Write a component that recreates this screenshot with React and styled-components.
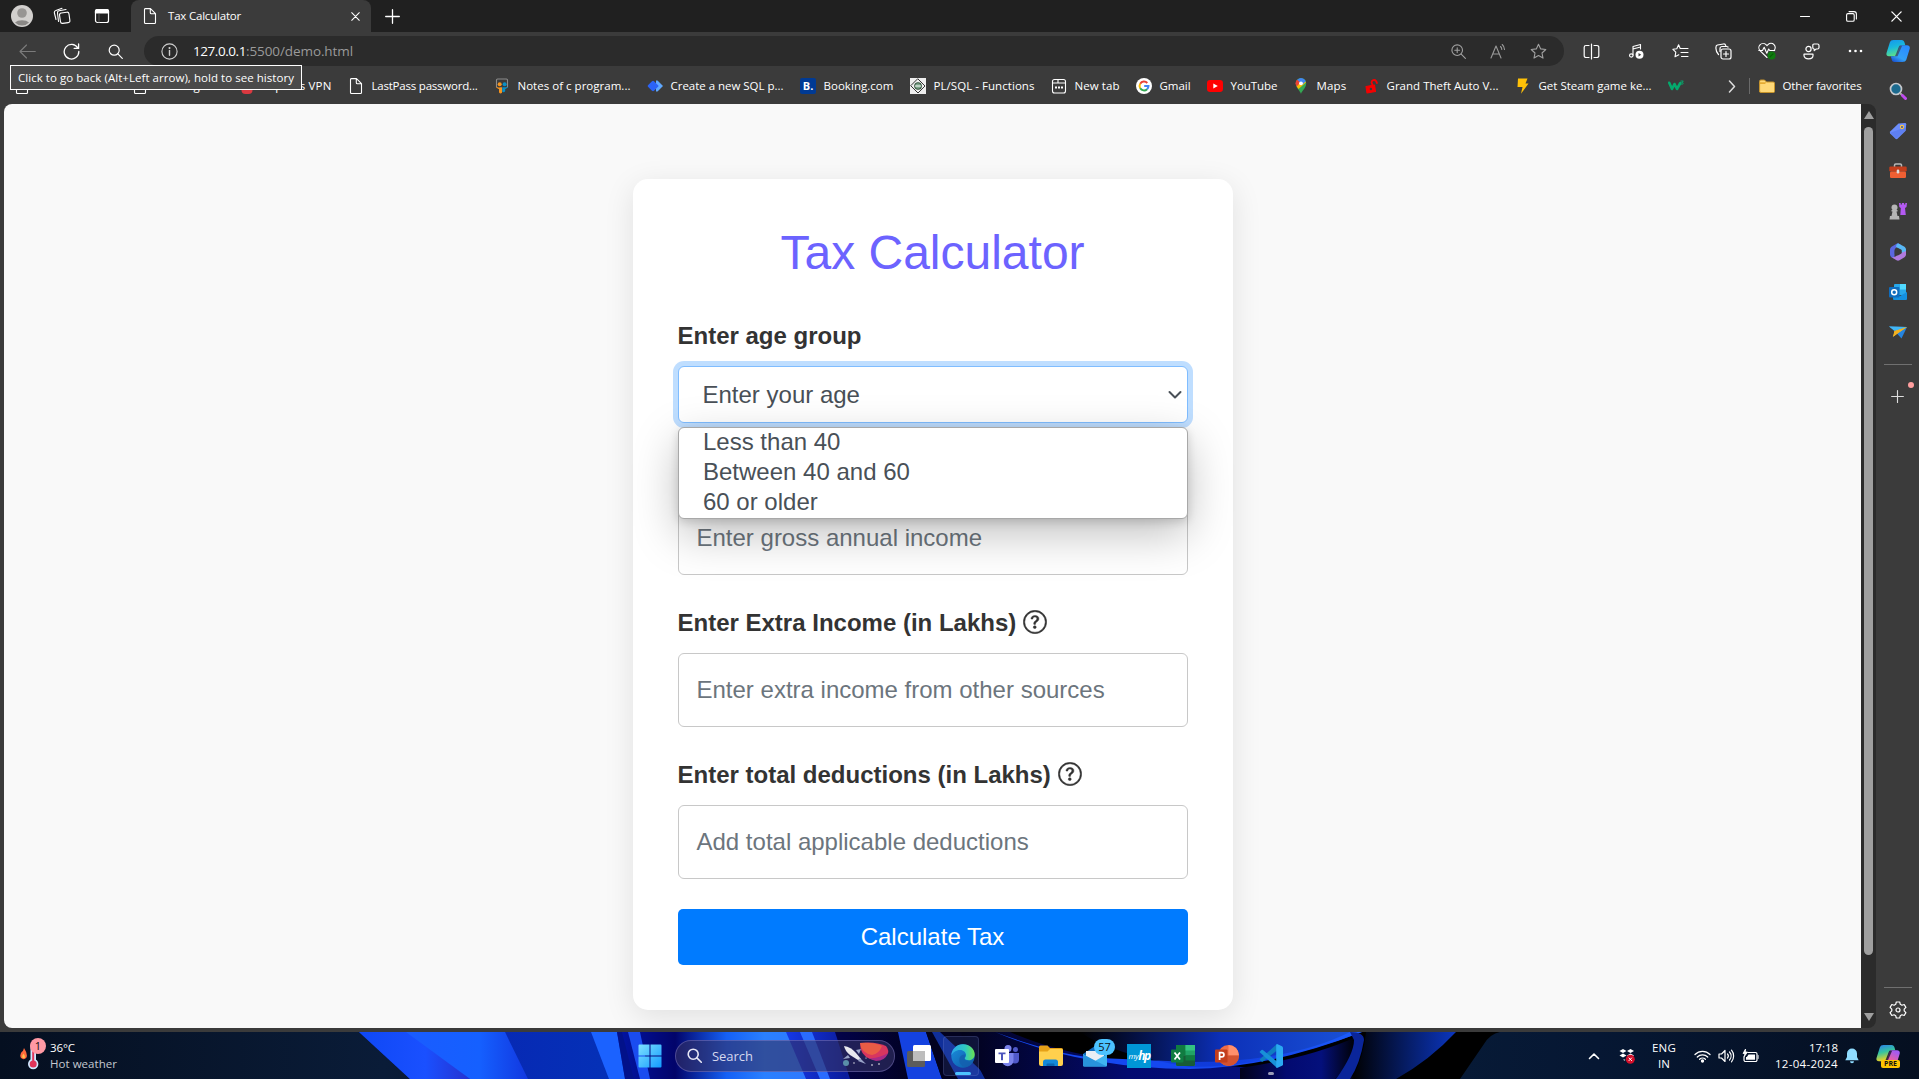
import React, { useLayoutEffect, useRef, useState } from "react";
import styled, { createGlobalStyle, css } from "styled-components";

const UI_FONT = '"Open Sans", "Noto Sans", sans-serif';
const PAGE_FONT = '"Liberation Sans", Arial, sans-serif';

const GlobalStyle = createGlobalStyle`
  * { box-sizing: border-box; }
  html, body { margin: 0; height: 100%; overflow: hidden; background: #3b3b3b; }
  body { font-family: ${UI_FONT}; }
  svg { display: block; flex: none; }
`;

/* ---------- text that keeps a given width ---------- */

const TextSpan = styled.span`
  display: inline-block;
  flex: none;
  white-space: pre;
  font-size: ${(p) => p.$size}px;
  line-height: ${(p) => p.$line || 16}px;
  color: ${(p) => p.$color || "#fff"};
`;

function FitText({ width, size = 11.5, line, color, children }) {
  const ref = useRef(null);
  const [spacing, setSpacing] = useState(0);
  useLayoutEffect(() => {
    const natural = ref.current.getBoundingClientRect().width;
    setSpacing((width - natural) / String(children).length);
  }, [width, children]);
  return (
    <TextSpan ref={ref} $size={size} $line={line} $color={color} style={{ letterSpacing: spacing }}>
      {children}
    </TextSpan>
  );
}

/* ---------- icons ---------- */

function Icon({ w = 16, h, box, children, color = "#fff", sw = 1.1 }) {
  const hh = h || w;
  return (
    <svg width={w} height={hh} viewBox={box || `0 0 ${w} ${hh}`} fill="none" stroke={color} strokeWidth={sw} strokeLinecap="round" strokeLinejoin="round">
      {children}
    </svg>
  );
}

const PageIcon = () => (
  <Icon w={16}>
    <path d="M3.5 .6h5L13.5 5.6v8.9a1 1 0 0 1-1 1h-9a1 1 0 0 1-1-1v-13a1 1 0 0 1 1-.9zM8.3 .8v4a1 1 0 0 0 1 1h4" />
  </Icon>
);
const Avatar = () => (
  <svg width="22" height="22" viewBox="0 0 22 22">
    <circle cx="11" cy="11" r="11" fill="#d2d0ce" />
    <circle cx="11" cy="8" r="4.8" fill="#979593" />
    <path d="M4 17.5a8 4.5 0 0 1 14 0a9.5 9.5 0 0 1-14 0z" fill="#8a8886" />
  </svg>
);
const WorkspacesIcon = () => (
  <Icon w={18}>
    <rect x="7" y="5.5" width="9.5" height="10.5" rx="2" transform="rotate(-8 12 11)" />
    <path d="M5.5 14.5l-1-8.500a2 2 0 0 1 1.500-2.200l7-1.300M3 12.500l-1.600-6.500a2 2 0 0 1 1.500-2.500L9 1.200" />
  </Icon>
);
const TabActionsIcon = () => (
  <Icon w={16} sw={1.2}>
    <rect x="1.500" y="1.500" width="13" height="13" rx="2" />
    <path d="M1.500 5V3a1.500 1.500 0 0 1 1.500-1.500h10A1.500 1.500 0 0 1 14.500 3v2z" fill="#fff" />
    <path d="M5 5.500v9" stroke="#777" strokeWidth=".6" />
  </Icon>
);
const CloseIcon = ({ s = 9 }) => (
  <Icon w={s} box="0 0 10 10" sw={1.2}><path d="M.8.8l8.400 8.400M9.200.8L.8 9.200" /></Icon>
);
const PlusIcon = ({ s = 15, color }) => (
  <Icon w={s} box="0 0 15 15" sw={1.3} color={color}><path d="M7.500.7v13.600M.7 7.500h13.600" /></Icon>
);
const MinIcon = () => <Icon w={10}><path d="M.5 5.500h9" /></Icon>;
const RestoreIcon = () => (
  <Icon w={11} sw={1.1}><rect x=".6" y="2.600" width="7.600" height="7.600" rx="1.300" /><path d="M3 .6h5a2.400 2.400 0 0 1 2.400 2.400v5" /></Icon>
);
const BackIcon = () => <Icon w={17} color="#7b7b7b"><path d="M16.300 8.500H1M7.500 2L1 8.500 7.500 15" /></Icon>;
const RefreshIcon = () => (
  <Icon w={17} sw={1.300}><path d="M14.800 5A7.300 7.300 0 1 0 15.800 8.500M15.600 1v4.400h-4.400" /></Icon>
);
const SearchIcon = ({ s = 15, sw = 1.200, color }) => (
  <Icon w={s} box="0 0 15 15" sw={sw} color={color}><circle cx="6.200" cy="6.200" r="5" /><path d="M9.900 9.900l4.400 4.400" /></Icon>
);
const InfoIcon = () => (
  <Icon w={17} color="#d0d0d0"><circle cx="8.500" cy="8.500" r="7.600" /><path d="M8.500 7.500v4.700" strokeWidth="1.400" /><circle cx="8.500" cy="5" r=".5" fill="#d0d0d0" /></Icon>
);
const ZoomInIcon = () => (
  <Icon w={15} color="#a0a0a0"><circle cx="6.200" cy="6.200" r="5.300" /><path d="M10.200 10.200l4.200 4.200M6.200 3.800v4.800M3.800 6.200h4.800" /></Icon>
);
const ReadAloudIcon = () => (
  <Icon w={17} color="#9a9a9a"><path d="M1 15L6 3l5 12M2.800 11h6.500M10.500 3.500a4 4 0 0 1 1.300 3M12.200 1.500a7 7 0 0 1 2.300 5" /></Icon>
);
const STAR = "M8.500 1.200l2.200 4.700 5.100.6-3.800 3.500 1 5.100-4.500-2.500-4.500 2.500 1-5.100L1.200 6.500l5.100-.6z";
const StarIcon = () => <Icon w={17} color="#a0a0a0"><path d={STAR} /></Icon>;
const SplitIcon = () => (
  <Icon w={17} sw={1.200}><path d="M6 2.500H3a1.800 1.800 0 0 0-1.800 1.800v8.400A1.800 1.800 0 0 0 3 14.500h3M11 2.500h3a1.800 1.800 0 0 1 1.800 1.800v8.400a1.800 1.800 0 0 1-1.800 1.800h-3M8.500 1v15" /></Icon>
);
const MusicIcon = () => (
  <Icon w={17}>
    <path d="M5 12V3.500L12.500 1.500V6M5 6l7.500-2" /><ellipse cx="3.300" cy="12.500" rx="1.800" ry="1.600" />
    <circle cx="11.500" cy="11.800" r="4" fill="#fff" stroke="none" /><path d="M10.500 10v3.600l2.700-1.800z" fill="#3b3b3b" stroke="none" />
  </Icon>
);
const FavoritesIcon = () => (
  <Icon w={17}><path d="M8.200 5.500L6.600 1.700 4.800 5.700.9 6.300l2.900 2.900-.8 4.600 3.800-2M8.500 5.500H16M9 9.500h7M9.500 13.500H16" /></Icon>
);
const CollectionsIcon = () => (
  <Icon w={17} sw={1.200}>
    <rect x="6" y="6" width="10" height="10" rx="2" /><path d="M11 8.500v5M8.500 11h5" />
    <path d="M3.500 11.500A9 9 0 0 1 1 4a2 2 0 0 1 1.500-2l6-1a2 2 0 0 1 2.200 1.500l.3 1M5 8.500V5.500a2 2 0 0 1 2-2h4.500a2 2 0 0 1 1.500.500" />
  </Icon>
);
const HealthIcon = () => (
  <Icon w={18}>
    <path d="M9 15.500L2.200 8.800A4.200 4.200 0 0 1 8 2.600l1 1 1-1a4.200 4.200 0 0 1 6 6" />
    <path d="M.8 8.500H4.500L6.200 5.300l2.600 6L10.700 7l1 1.500h5" />
    <circle cx="13.600" cy="13.600" r="4" fill="#0f7b0f" stroke="none" /><path d="M12 14.800l3-3" stroke="#0a5a0a" />
  </Icon>
);
const FeedbackIcon = () => (
  <Icon w={17} sw={1.200}>
    <circle cx="5.500" cy="6" r="2.600" /><path d="M1 11.200h9v1.300c0 2-2 3.300-4.500 3.300S1 14.500 1 12.500z" />
    <path d="M11 1h3.500A1.500 1.500 0 0 1 16 2.500v2A1.500 1.500 0 0 1 14.500 6h-1.300l-2 1.600V6A1.500 1.500 0 0 1 9.800 4.500v-2A1.300 1.300 0 0 1 11 1z" />
  </Icon>
);
const DotsIcon = () => (
  <Icon w={15} h={4}><g fill="#fff" stroke="none"><circle cx="2" cy="2" r="1.300" /><circle cx="7.500" cy="2" r="1.300" /><circle cx="13" cy="2" r="1.300" /></g></Icon>
);
const CopilotIcon = ({ pre }) => (
  <svg width="24" height="24" viewBox="0 0 24 24">
    <defs>
      <linearGradient id={pre ? "cpA" : "cA"} x1="0" y1="0" x2=".3" y2="1">
        {pre
          ? [<stop key="a" offset="0" stopColor="#2a7bf0" />, <stop key="b" offset=".5" stopColor="#35c4a0" />, <stop key="c" offset="1" stopColor="#f5d21c" />]
          : [<stop key="a" offset="0" stopColor="#1594f0" />, <stop key="b" offset=".5" stopColor="#19b8dc" />, <stop key="c" offset="1" stopColor="#5be08a" />]}
      </linearGradient>
      <linearGradient id={pre ? "cpB" : "cB"} x1=".6" y1="0" x2="0" y2="1">
        {pre
          ? [<stop key="a" offset="0" stopColor="#a45bf0" />, <stop key="b" offset=".5" stopColor="#f0609a" />, <stop key="c" offset="1" stopColor="#ff9a50" />]
          : [<stop key="a" offset="0" stopColor="#2a8cff" />, <stop key="b" offset=".6" stopColor="#33a0f5" />, <stop key="c" offset="1" stopColor="#1440c8" />]}
      </linearGradient>
    </defs>
    <path d="M7.500 1h8c1.800 0 2.500 1 3 2.500l.8 2.800h-3.500c-2 0-2.500 1-3 2.500l-2 6.500c-.5 1.400-1.500 2-3 2H3C.8 17.300 0 15.800.5 14L3.800 3.500C4.400 1.800 5.500 1 7.500 1z" fill={`url(#${pre ? "cpA" : "cA"})`} />
    <path d="M16.500 23h-8c-1.500 0-2.300-.8-2.700-2.200l-1-3.500h3c2 0 2.700-1 3.200-2.500l2-6.500c.5-1.400 1.500-2 3-2H21c2.200 0 3.200 1.500 2.700 3.500L20.400 20.500C19.800 22.200 18.500 23 16.500 23z" fill={`url(#${pre ? "cpB" : "cB"})`} />
    <path d="M13.300 6.700h2.800L11.500 17.300H9z" fill={pre ? "#0b1526" : "#3b4a5a"} opacity=".75" />
  </svg>
);

/* favicons */
const RedAppIcon = () => <Icon w={16}><rect x="2.500" y="0" width="11" height="16" rx="4" fill="#da3940" stroke="none" /></Icon>;
const SlideIcon = () => (
  <Icon w={16}>
    <path d="M2.500 9V2A1 1 0 0 1 3.500 1h9a1 1 0 0 1 1 1v7" stroke="#8c8c8c" />
    <circle cx="5.700" cy="6.200" r="2" fill="#f7941e" stroke="none" /><circle cx="10.600" cy="6.200" r="2" fill="#0a8fc4" stroke="none" />
    <path d="M2 8.500c2.500 1.600 4 .8 6 .8v5.500c-1.500 1.500-3 .5-3-1V11C3.500 10.700 2.500 9.800 2 8.500z" fill="#f7941e" stroke="none" />
    <path d="M14 8.500c-2 1-4 .8-5.800.8v4.500c1.500 1 3 .3 3-1V11c1.300-.3 2.300-1.200 2.800-2.500z" fill="#0a8fc4" stroke="none" />
  </Icon>
);
const DiamondIcon = () => (
  <Icon w={16}><path d="M9 2.500h1.500L16 8l-5.500 5.500H9z" fill="#5fa8ff" stroke="none" /><path d="M1 7.300L5 3.200Q6 2.300 7 3.200l4.300 4.200q.6.600 0 1.200L7 12.800q-1 .9-2 0L1 8.700q-.7-.7 0-1.400z" fill="#2b63f6" stroke="none" /></Icon>
);
const BIcon = styled.span`
  width: 16px; height: 16px; border-radius: 2px; background: #003a94; color: #fff;
  font: 700 11px/16px ${UI_FONT}; text-align: center;
`;
const PlsqlIcon = () => (
  <Icon w={16}><rect width="16" height="16" fill="#eee" stroke="none" /><path d="M8 1l7 7-7 7-7-7z" stroke="#333" strokeWidth="1" /><circle cx="8" cy="8" r="3.300" fill="#7da58a" stroke="#34523d" /><path d="M5.500 8h5" stroke="#fff" /></Icon>
);
const NewTabIcon = () => (
  <Icon w={16}><rect x="1.500" y="1.500" width="13" height="13.500" rx="2" /><path d="M1.500 5h13M7 1.500V5" /><g fill="#fff" stroke="none"><rect x="4" y="8.500" width="2" height="2" /><rect x="7" y="8.500" width="2" height="2" /><rect x="10" y="8.500" width="2" height="2" /></g></Icon>
);
const GoogleIcon = () => (
  <svg width="16" height="16" viewBox="0 0 16 16">
    <circle cx="8" cy="8" r="8" fill="#fff" />
    <g fill="none" strokeWidth="2">
      <path d="M11.300 5A4.500 4.500 0 0 0 4.200 5.700" stroke="#ea4335" />
      <path d="M4.200 5.700a4.500 4.500 0 0 0 0 4.600" stroke="#fbbc05" />
      <path d="M4.200 10.300a4.500 4.500 0 0 0 6.900.9" stroke="#34a853" />
      <path d="M11.100 11.200A4.500 4.500 0 0 0 12.500 8H8.200" stroke="#4285f4" />
    </g>
  </svg>
);
const YouTubeIcon = () => (
  <svg width="16" height="16" viewBox="0 0 16 16"><rect y="2" width="16" height="12" rx="3.200" fill="#f00" /><path d="M6.300 5.400v5.200L10.800 8z" fill="#fff" /></svg>
);
const MapsIcon = () => (
  <svg width="16" height="16" viewBox="0 0 16 16">
    <path d="M8 16C7.300 13 2.800 10 2.800 5.300A5.200 5.200 0 0 1 13.200 5.300C13.200 10 8.700 13 8 16z" fill="#34a853" />
    <path d="M3.700 8.500A5.200 5.200 0 0 1 4 2L8 5.300z" fill="#ea4335" />
    <path d="M3.700 8.500L10 1.500 13 4.500 5.500 11z" fill="#fbbc05" />
    <path d="M4 2A5.200 5.200 0 0 1 12.800 3.300L9 7 4 2z" fill="#4285f4" /><path d="M2.800 5.300A5.200 5.200 0 0 1 4.200 1.800L7 4.200 3.500 8z" fill="#ea4335" />
    <circle cx="8" cy="5.300" r="1.900" fill="#fff" />
  </svg>
);
const UnlockIcon = () => (
  <Icon w={16}><path d="M3 8.500l8.500-1.500 1 6.500-8.500 1.500z" fill="#f50000" stroke="#f50000" /><path d="M9.500 7L8.500 4.500a2.500 2.500 0 0 1 4.500-1.500l1 2" stroke="#f50000" strokeWidth="1.800" /><circle cx="7.900" cy="11" r="1.200" fill="#3b3b3b" stroke="none" /></Icon>
);
const BoltIcon = () => <Icon w={16}><path d="M3 .5h9.500L10.500 5.500h3L6 15.800 7.500 9H2.500z" fill="#ffc107" stroke="none" /></Icon>;
const W3Icon = () => (
  <Icon w={17} h={16} color="#04aa6d"><path d="M1.200 4.800L4 11l2.500-5L9 11l3.300-6" strokeWidth="2.600" /><path d="M13 3h2.300L14 4.500c2 0 1.600 2.300-.8 1.600" strokeWidth=".9" /></Icon>
);
const FolderIcon = () => (
  <Icon w={16} color="#c9952a" sw={1}><path d="M.6 13.500V3.300A1.300 1.300 0 0 1 2 2h3.500L7.500 4h6.700a1.300 1.300 0 0 1 1.300 1.300v8.200a1 1 0 0 1-1 1H1.600a1 1 0 0 1-1-1z" fill="#ffd978" /><path d="M.8 6H6l1.500-1.800H.8z" fill="#e5ab33" stroke="none" /></Icon>
);
const ChevronRight = () => <Icon w={8} h={13} color="#ddd" sw={1.500}><path d="M1.500 1l5 5.500-5 5.500" /></Icon>;

/* sidebar icons */
const SideSearch = () => (
  <Icon w={18}><circle cx="7" cy="7" r="5.500" fill="#1c6a8e" stroke="#c5c8cc" strokeWidth="1.700" /><path d="M11.500 11.500l2 2" stroke="#aaa" strokeWidth="2" /><path d="M13.500 13.500l3 3" stroke="#c04bf0" strokeWidth="3" /></Icon>
);
const SideTag = () => (
  <Icon w={18}><path d="M9.500 1.500L16 1q1.200 0 1.200 1.200l-.5 6.500L8.500 16.800q-1 .8-2 0L1.200 11.500q-.8-1 0-2z" fill="#6c8dfb" stroke="none" /><path d="M1.200 10.800l6 5.900 9.300-8.500.2-3z" fill="#4f72e8" opacity=".5" stroke="none" /><circle cx="13" cy="5" r="1.600" fill="#3556b8" stroke="#ffc83d" /></Icon>
);
const SideToolbox = () => (
  <Icon w={18}><path d="M5.500 5V3.200A1.200 1.200 0 0 1 6.700 2h4.600a1.200 1.200 0 0 1 1.200 1.200V5" stroke="#b8b8b8" strokeWidth="1.500" /><rect x=".3" y="4.500" width="17.400" height="5" rx="1.200" fill="#c43e1c" stroke="none" /><rect x="1" y="9.500" width="16" height="6.500" rx="1.200" fill="#ef5f33" stroke="none" /><rect x="7.700" y="7.500" width="2.600" height="4" rx="1.200" fill="#ddd" stroke="none" /></Icon>
);
const SideChess = () => (
  <Icon w={18}><path d="M10 1h1.700v1.500h1.200V1h2.200v1.500h1.200V1H18l-.5 4-1.500 1 .8 7h-5.500l.5-7-1.500-1z" fill="#b45af2" stroke="none" /><g fill="#b5b5b5" stroke="none"><circle cx="5.500" cy="5.500" r="3" /><path d="M2.500 8h6v1.500h-1L8.500 14H10l.5 3.500H.5L1 14h1.500l1-4.500h-1z" /></g></Icon>
);
const SideM365 = () => (
  <Icon w={18}>
    <path d="M9.500.4Q8.800 0 8 .6L2.500 3.800Q1 4.700 1 6.500v5Q1 13.300 2.500 14.200L5.500 15.800V7.500Q5.500 5.700 7 4.800L12 2z" fill="#5a67e0" stroke="none" />
    <path d="M9 .3l6.500 3.500Q17 4.700 17 6.500V12l-4.500-2.500V6.800L7 4Q7 1.500 9 .3z" fill="#59b8f5" stroke="none" />
    <path d="M17 9v2.500q0 1.800-1.500 2.700L10.500 17.300q-1.500.8-3 0L2.300 14Q4.500 14.500 6 13.700L12.500 9.800 17 8z" fill="#b07bdf" stroke="none" />
    <path d="M5.800 7.500L9 5.400l3.500 1.800v3.300L8.800 12.500 5.800 11z" fill="#3b3b3b" stroke="none" />
  </Icon>
);
const SideOutlook = () => (
  <svg width="18" height="18" viewBox="0 0 18 18"><rect x="5" y="1" width="12" height="11" rx="1" fill="#28a8ea" /><rect x="11" y="1" width="6" height="5.500" fill="#50d9ff" /><path d="M4 9l7 4 7-4v7a1 1 0 0 1-1 1H5a1 1 0 0 1-1-1z" fill="#1490df" /><rect y="4" width="10.500" height="10.500" rx="1" fill="#0f6cbd" /><circle cx="5.200" cy="9.200" r="2.500" fill="none" stroke="#fff" strokeWidth="1.500" /></svg>
);
const SidePlane = () => (
  <svg width="18" height="18" viewBox="0 0 18 18"><path d="M0 3.500L18 4 8 8.500z" fill="#3aa0f0" /><path d="M18 4L12.500 15.500 7.500 10z" fill="#2584e0" /><path d="M18 4L5.500 8 3.800 14 8.500 10.500z" fill="#f8bf2d" /><path d="M0 3.500l5.500 4.500L18 4z" fill="#41b6f5" /><path d="M5.500 8L4.500 13.500l4-3L18 4z" fill="#f2b01e" /></svg>
);
const GearIcon = () => (
  <Icon w={18} sw={1.200}><path d="M7.300 1h3.400l.6 2.300 1.600.9 2.300-.7 1.700 2.900-1.700 1.700v1.800l1.700 1.700-1.700 2.900-2.300-.7-1.600.9-.6 2.300H7.300l-.6-2.300-1.600-.9-2.300.7-1.700-2.900 1.700-1.700V8.100L1.100 6.400l1.700-2.900 2.300.7 1.600-.9z" /><circle cx="9" cy="9" r="2" /></Icon>
);

/* taskbar icons */
const TB = ({ children, w = 24 }) => <svg width={w} height="24" viewBox={`0 0 ${w} 24`}>{children}</svg>;
const WindowsIcon = () => (
  <TB><defs><linearGradient id="win" x1="0" y1="0" x2="1" y2="1"><stop offset="0" stopColor="#7fe0ff" /><stop offset="1" stopColor="#129bff" /></linearGradient></defs>
    <path d="M.5 1.500q0-1 1-1h10v11H.5zM12.500.5h10q1 0 1 1v10h-11zM.5 12.500h11v11h-10q-1 0-1-1zM12.500 12.500h11v10q0 1-1 1h-10z" fill="url(#win)" /></TB>
);
const TaskViewIcon = () => (
  <TB><rect x="0" y="7" width="18" height="16" rx="1.500" fill="#5c5c5c" /><rect x="6" y="1" width="18" height="16" rx="1.500" fill="#fff" /><rect x="6" y="7" width="12" height="10" fill="#bdbdbd" /></TB>
);
const EdgeIcon = () => (
  <TB><defs>
    <linearGradient id="eg1" x1="0" y1=".3" x2="1" y2=".3"><stop offset="0" stopColor="#2ba6ec" /><stop offset=".6" stopColor="#2fc9c0" /><stop offset="1" stopColor="#6be24f" /></linearGradient>
    <linearGradient id="eg2" x1="0" y1="0" x2="1" y2="1"><stop offset="0" stopColor="#1b8fe0" /><stop offset="1" stopColor="#0c59a4" /></linearGradient></defs>
    <circle cx="12" cy="12" r="11.700" fill="url(#eg2)" />
    <path d="M.3 11.500C.8 5 5.800.3 12 .3c6.500 0 11.700 4.700 11.700 10 0 3.500-2.500 6-5.700 6-2.600 0-4.300-1-4.300-2 0-.8 1.300-1 1.300-3.300C15 8.500 12.500 6 9 6 5 6 1.500 8.500.3 11.500z" fill="url(#eg1)" />
    <path d="M13.500 14.300c-.3 1 1.500 4.500 8.500 3.700-1.500 2.500-4 4.300-6.500 5-5 .5-9-5-6.500-10 1-2 3-2.800 5-2.500.8 1.500-.3 2.600-.5 3.800z" fill="#145fae" opacity=".8" />
  </TB>
);
const TeamsIcon = () => (
  <TB><circle cx="13" cy="4.500" r="3.500" fill="#7b83eb" /><circle cx="20.500" cy="5.500" r="2.500" fill="#5059c9" /><path d="M16 9h8v6.500a4 4 0 0 1-8 0z" fill="#5059c9" /><path d="M7 9h11.500v7.500a5.700 5.700 0 0 1-11.500 0z" fill="#7b83eb" /><rect y="5" width="14" height="14" rx="1" fill="#fff" /><path d="M3.500 8.500h7v1.800H8v6H6v-6H3.500z" fill="#4b53bc" /></TB>
);
const ExplorerIcon = () => (
  <TB><path d="M0 3a1.500 1.500 0 0 1 1.500-1.500h7L11 4h11.500A1.500 1.500 0 0 1 24 5.500V10H0z" fill="#e6a117" /><path d="M0 7.500h8.500L11 5h11.500A1.500 1.500 0 0 1 24 6.500V20a2 2 0 0 1-2 2H2a2 2 0 0 1-2-2z" fill="#ffd04d" /><path d="M4 22v-4a2.500 2.500 0 0 1 2.500-2.500h10A2.500 2.500 0 0 1 19 18v4z" fill="#1488d8" /><path d="M7.500 22v-1.500a1 1 0 0 1 1-1h6a1 1 0 0 1 1 1V22z" fill="#0c66b0" /></TB>
);
const MailIcon = () => (
  <TB><path d="M0 10L12 2l12 8v12H0z" fill="#0f6cbd" /><path d="M3 7h18v6l-9 5-9-5z" fill="#e9eef4" /><path d="M0 10l12 7 12-7v11a1.500 1.500 0 0 1-1.500 1.500h-21A1.500 1.500 0 0 1 0 21z" fill="#3fb4f0" /><path d="M0 10.500L24 22.500H1.500A1.500 1.500 0 0 1 0 21z" fill="#2893dc" /></TB>
);
const ExcelIcon = () => (
  <TB><rect x="5" y="1" width="19" height="21" rx="1.500" fill="#21a366" /><path d="M5 1h9.500v10.500H5z" fill="#107c41" /><path d="M14.500 1H24v5.500h-9.500z" fill="#33c481" /><path d="M5 11.500h19V20.500a1.500 1.500 0 0 1-1.500 1.500h-16A1.500 1.500 0 0 1 5 20.500z" fill="#185c37" /><path d="M14.500 11.500H24v5h-9.500z" fill="#107c41" /><rect y="5.500" width="12.500" height="13" rx="1" fill="#107c41" /><path d="M3.500 8.500l5.500 7M9 8.500l-5.500 7" stroke="#fff" strokeWidth="1.800" /></TB>
);
const PptIcon = () => (
  <TB><circle cx="13.500" cy="11.500" r="10.500" fill="#ed6c47" /><path d="M13.500 1a10.500 10.500 0 0 1 10.500 10.500H13.500z" fill="#ff8f6b" /><path d="M3 11.500h21a10.500 10.500 0 0 1-21 0z" fill="#d35230" /><rect y="5.500" width="12.500" height="13" rx="1" fill="#c43e1c" /><path d="M4.600 16V8.600h2.200a2.100 2.100 0 0 1 0 4.300H4.600" fill="none" stroke="#fff" strokeWidth="1.700" /></TB>
);
const VsCodeIcon = () => (
  <TB><path d="M.5 15.500L2.500 17.500q.7.500 1.400 0L18 6.500V0z" fill="#0f7dc0" /><path d="M.5 8L2.500 6q.7-.5 1.400 0L18 17.500V24z" fill="#1890d8" /><path d="M18 0l5 2.200q1 .5 1 1.500v16.600q0 1-1 1.500L18 24q-.8-.3-.8-1.500v-21Q17.200.3 18 0z" fill="#2aa9f2" /></TB>
);
const BannerArt = () => (
  <svg width="50" height="30" viewBox="0 0 50 30">
    <path d="M18 2q15-2 26 3 4 5 1 9-7 6-17 4Q18 14 18 2z" fill="#d8365f" /><path d="M18 2q14-1 22 3-3 8-10 9Q19 12 18 2z" fill="#ef6a3c" opacity=".75" /><path d="M27 17q9 1 19-5-3 8-12 8-4-1-7-3z" fill="#a82a86" />
    <path d="M2 5q7 1 12 7l5 6-3 1-8-5Q3 10 2 5z" fill="#e8e8ee" /><path d="M6 14l-5 4 7-1zM14 9l5-1-2 5zM18 17l6 6-8-3z" fill="#9aa4c8" />
    <circle cx="4" cy="22" r="3" fill="#5a8fa8" /><g fill="#fff"><circle cx="12" cy="22" r=".7" /><circle cx="30" cy="24" r=".8" /><circle cx="37" cy="23" r=".8" /><circle cx="24" cy="17" r=".6" /></g>
  </svg>
);
const WeatherArt = () => (
  <svg width="28" height="38" viewBox="0 0 28 38">
    <path d="M1 21q-2-3.500 1.500-7 0 1.500 1.500-3 4 6 2.500 9.500-2.500 3-5.500.5z" fill="#ff6a3c" /><path d="M2.500 21q-1-2 1-4.500 2 2.500 1.300 4.500z" fill="#ffc04d" />
    <rect x="10.500" y="6" width="5.500" height="22" rx="2.700" fill="#cfe9ff" /><circle cx="13.200" cy="27" r="5.200" fill="#cfe9ff" /><circle cx="13.200" cy="27" r="3.500" fill="#e0355a" /><rect x="12.200" y="12" width="2" height="14" fill="#e0355a" />
  </svg>
);
const ChevronUp = () => <Icon w={12} h={8} sw={1.600}><path d="M1.500 6.500L6 2l4.500 4.500" /></Icon>;
const DropboxIcon = () => (
  <svg width="16" height="16" viewBox="0 0 16 16"><g fill="#fff"><path d="M4 1l3.500 2L4 5 .5 3zM11.500 1L15 3l-3.500 2L8 3zM4 5.500l3.500 2L4 9.500.5 7.500zM11.500 5.500L15 7.500l-3.500 2-3.500-2zM4.500 11l2 1-1.500.8z" /></g><circle cx="11.300" cy="11.300" r="4.500" fill="#d4102b" /><path d="M9.700 9.700l3.200 3.200M12.900 9.700l-3.200 3.200" stroke="#fff" strokeWidth="1" /></svg>
);
const WifiIcon = () => (
  <Icon w={17} h={14} sw={1.300}><path d="M1 5.500a10.500 10.500 0 0 1 15 0M3.300 8a7.400 7.400 0 0 1 10.400 0M5.600 10.300a4.200 4.200 0 0 1 5.800 0" /><circle cx="8.500" cy="12" r="1" fill="#fff" /></Icon>
);
const SpeakerIcon = () => (
  <Icon w={17} h={14} sw={1.200}><path d="M1 5h2.500L7 1.500v11L3.500 9H1zM9.500 5a3 3 0 0 1 0 4M11.500 3a6 6 0 0 1 0 8M13.500 1.200a9 9 0 0 1 0 11.600" /></Icon>
);
const BatteryIcon = () => (
  <Icon w={17} h={14} sw={1.200}><path d="M6 3.500h7.500A1.500 1.500 0 0 1 15 5v6a1.500 1.500 0 0 1-1.500 1.500h-10A1.500 1.500 0 0 1 2 11V8" /><path d="M4 8h9v2.700H4zM6.500 5.500H13v3H4.500z" fill="#fff" stroke="none" /><path d="M16.200 6.500v3M3.500 0L1 4.500h2L2 8l3.500-5h-2z" fill="#fff" strokeWidth=".8" /></Icon>
);
const BellIcon = () => (
  <svg width="14" height="16" viewBox="0 0 14 16"><path d="M7 .5A5 5 0 0 1 12 5.500V9l1.700 3.300H.3L2 9V5.500A5 5 0 0 1 7 .5zM5 13.300h4a2 2 0 0 1-4 0z" fill="#8fdcff" /></svg>
);
const Wallpaper = () => (
  <svg width="1919" height="47" viewBox="0 0 1919 47" preserveAspectRatio="none">
    <defs>
      <linearGradient id="w0"><stop offset="0" stopColor="#050f20" /><stop offset=".2" stopColor="#0a1c38" /><stop offset=".5" stopColor="#000" /><stop offset="1" stopColor="#061022" /></linearGradient>
      <linearGradient id="w1"><stop offset="0" stopColor="#0f48f5" /><stop offset=".6" stopColor="#1a50ff" /><stop offset="1" stopColor="#2632d0" /></linearGradient>
      <linearGradient id="w2"><stop offset="0" stopColor="#1a5cff" /><stop offset=".6" stopColor="#1560ff" /><stop offset="1" stopColor="#1238e0" /></linearGradient>
      <linearGradient id="w3"><stop offset="0" stopColor="#0a1fb0" /><stop offset="1" stopColor="#0433b8" /></linearGradient>
      <linearGradient id="w4"><stop offset="0" stopColor="#0213a0" /><stop offset=".28" stopColor="#02046a" /><stop offset=".55" stopColor="#1560f5" /><stop offset=".75" stopColor="#2a80ff" /><stop offset="1" stopColor="#2f78ff" /></linearGradient>
      <linearGradient id="w5"><stop offset="0" stopColor="#1538e8" /><stop offset=".5" stopColor="#0b1c9c" /><stop offset="1" stopColor="#1540e0" /></linearGradient>
      <linearGradient id="w6"><stop offset="0" stopColor="#02024a" /><stop offset="1" stopColor="#01011c" /></linearGradient>
      <linearGradient id="w7"><stop offset="0" stopColor="#0a2bb8" stopOpacity="0" /><stop offset=".5" stopColor="#0e38d8" /><stop offset="1" stopColor="#1f62ff" /></linearGradient>
      <linearGradient id="w8"><stop offset="0" stopColor="#02021a" /><stop offset=".4" stopColor="#030a70" /><stop offset=".7" stopColor="#04107c" /><stop offset="1" stopColor="#000" /></linearGradient>
      <linearGradient id="w9"><stop offset="0" stopColor="#000" /><stop offset="1" stopColor="#0b36c0" /></linearGradient>
      <linearGradient id="w10"><stop offset="0" stopColor="#071a36" /><stop offset=".3" stopColor="#061733" /><stop offset="1" stopColor="#050f20" /></linearGradient>
    </defs>
    <rect width="1919" height="47" fill="url(#w0)" />
    <path d="M359 0H640V47H410z" fill="url(#w3)" />
    <path d="M359 0H410L470 47H410z" fill="url(#w1)" />
    <path d="M406 0H505L528 47H470z" fill="url(#w2)" />
    <path d="M591 0h26l8 47h-16z" fill="#1b62ff" /><path d="M617 0h11l12 47h-15z" fill="#02118a" />
    <path d="M622 0H792L812 47H634z" fill="url(#w4)" />
    <path d="M628 0l12 47h10L640 0z" fill="#1a4cf0" />
    <path d="M786 0H870L905 47H806z" fill="url(#w5)" /><path d="M800 0h12l18 47h-10z" fill="#2a6cff" />
    <path d="M835 0H905L925 47H850z" fill="url(#w6)" />
    <path d="M898 0H926L942 47H908z" fill="#1442e0" /><path d="M926 0H1020V47H942z" fill="#020220" /><path d="M940 0l50 47h-32L932 0z" fill="#102f9a" />
    <path d="M1000 0h500l-40 47H1000z" fill="#000" />
    <path d="M960 0H1010Q1090 36 1230 34L1380 47H985z" fill="url(#w8)" />
    <path d="M995 0Q1060 24 1100 26L1190 30Q1290 30 1350 0H1362Q1270 36 1190 37Q1080 36 995 0z" fill="#1548f0" />
    <path d="M1080 0H1362Q1270 35 1190 35Q1110 22 1080 0z" fill="url(#w7)" opacity=".85" />
    <path d="M1240 36Q1310 26 1356 5Q1352 30 1335 47H1240z" fill="url(#w8)" />
    <path d="M1350 0Q1364 0 1364 8Q1360 32 1350 47H1336Q1354 22 1354 8z" fill="#0a259a" />
    <path d="M1366 0H1456Q1430 28 1396 47H1352Q1364 24 1366 0z" fill="url(#w9)" />
    <path d="M1500 0H1919V47H1460L1484 12Q1490 2 1500 0z" fill="url(#w10)" />
  </svg>
);

/* ---------- layout ---------- */

const Screen = styled.div`
  width: 1919px; height: 1079px; display: flex; flex-direction: column; overflow: hidden; background: #3b3b3b;
`;
const TabBar = styled.header`
  height: 32px; flex: none; display: flex; align-items: center; background: #202020;
`;
const Slot = styled.div`
  width: ${(p) => p.$w}px; height: ${(p) => (p.$h ? `${p.$h}px` : "100%")}; flex: none;
  display: flex; align-items: center; justify-content: center;
`;
const Tab = styled.div`
  width: 240px; height: 32px; margin-left: 6px; padding: 0 11px 0 11px; flex: none;
  display: flex; align-items: center; background: #3b3b3b; border-radius: 8px 8px 0 0;
`;
const TabTitle = styled.div`flex: 1; padding-left: 10px; display: flex;`;
const WindowButtons = styled.div`margin-left: auto; display: flex; height: 100%;`;

const Body = styled.div`height: 1000px; flex: none; display: flex;`;
const Main = styled.div`width: 1876px; flex: none; display: flex; flex-direction: column;`;
const Toolbar = styled.div`height: 38px; flex: none; display: flex; align-items: center; position: relative; padding-left: 5px;`;
const AddressBar = styled.div`
  width: 1420px; height: 30px; margin: 0 5px 0 7px; padding: 0 6px 0 17px; flex: none;
  display: flex; align-items: center; background: #2b2b2b; border-radius: 15px;
`;
const Url = styled.div`flex: 1; display: flex; padding-left: 15px;`;
const Tooltip = styled.div`
  position: absolute; left: 10px; top: 33px; z-index: 5; width: 292px; height: 25px; padding-left: 7px;
  display: flex; align-items: center; background: #4a4a4a; border: 1px solid #fff;
`;
const Bookmarks = styled.nav`height: 34px; flex: none; display: flex; align-items: center; padding: 0 11px 2px 14px;`;
const Bookmark = styled.div`width: ${(p) => p.$w}px; flex: none; display: flex; align-items: center; gap: 7.500px;`;
const BarDivider = styled.i`width: 1px; height: 16px; margin: 0 9px 0 13px; background: #6a6a6a; flex: none;`;
const Viewport = styled.div`flex: 1; display: flex; margin: 0 0 4px 4px; min-height: 0; border-radius: 8px; overflow: hidden;`;
const Page = styled.main`
  flex: 1; background: #f9f9f9; display: flex; justify-content: center; align-items: flex-start; padding-top: 75px; overflow: hidden;
  font-family: ${PAGE_FONT};
`;
const ScrollTrack = styled.div`
  width: 15px; background: #2b2b2b; display: flex; flex-direction: column; align-items: center; padding: 7px 0;
`;
const ScrollThumb = styled.div`width: 9px; height: 828px; margin-top: 8px; border-radius: 5px; background: #9f9f9f;`;
const Arrow = styled.i`
  width: 0; height: 0; border: 5px solid transparent; border-top-width: 0; border-bottom: 8px solid #9f9f9f;
  ${(p) => p.$down && css`transform: rotate(180deg); margin-top: auto;`}
`;

const Card = styled.form`
  width: 600px; height: 831px; padding: 45px; background: #fff; border-radius: 15px;
  box-shadow: 0 7px 30px rgba(0, 0, 0, 0.1); display: flex; flex-direction: column;
`;
const Heading = styled.h1`
  margin: 0; height: 94px; font-size: 48px; line-height: 57px; font-weight: 400; text-align: center; color: #6c63ff;
`;
const Group = styled.div`position: relative; display: flex; flex-direction: column; margin-bottom: 30px;`;
const Label = styled.label`
  height: 48px; font-size: 24px; line-height: 35px; font-weight: 700; color: #333;
  display: flex; align-items: flex-start; gap: 7px;
`;
const HelpWrap = styled.span`padding-top: 5px;`;
const Field = styled.div`
  height: 74px; padding: 0 18px; border: 1px solid #c8c8c8; border-radius: 6px; font-size: 24px; line-height: 72px; color: #6c757d;
`;
const Select = styled.div`
  height: 57px; padding: 0 5px 0 24px; border: 1px solid #80bdff; border-radius: 6px; background: #fff;
  box-shadow: 0 0 0 5px rgba(0, 123, 255, 0.25); font-size: 24px; color: #495057;
  display: flex; align-items: center; justify-content: space-between;
`;
const Menu = styled.ul`
  position: absolute; z-index: 2; top: 109px; left: 0; right: 0; height: 92px; margin: 0; padding: 0 0 0 24.500px; list-style: none;
  background: #fff; border: 1px solid #a8a8a8; border-radius: 6px;
  box-shadow: 0 15px 45px rgba(0, 0, 0, 0.25), 0 3px 10px rgba(0, 0, 0, 0.15);
`;
const Option = styled.li`height: 30px; font-size: 24px; line-height: 27px; color: #495057;`;
const Submit = styled.button`
  height: 56px; border: 0; border-radius: 5px; background: #007bff; color: #fff; font: 400 24px/56px ${PAGE_FONT}; padding: 0;
`;

const Sidebar = styled.aside`flex: 1; display: flex; flex-direction: column; align-items: center;`;
const SideRule = styled.i`width: 28px; height: 1px; background: #707070; margin: ${(p) => p.$m};`;
const Spacer = styled.div`flex: 1;`;
const AddSlot = styled.div`position: relative; width: 43px; height: 36px; display: flex; align-items: center; justify-content: center;`;
const Dot = styled.i`position: absolute; right: 5px; top: 4px; width: 6px; height: 6px; border-radius: 50%; background: #ff9e9e;`;

const Taskbar = styled.footer`position: relative; height: 47px; flex: none; display: flex; align-items: center;`;
const Backdrop = styled.div`position: absolute; inset: 0; z-index: 0;`;
const Strip = styled.div`position: relative; z-index: 1; flex: 1; height: 47px; display: flex; align-items: center;`;
const Weather = styled.div`position: relative; width: 628px; padding-left: 20px; display: flex; align-items: center; gap: 2px;`;
const Stack = styled.div`display: flex; flex-direction: column; align-items: ${(p) => p.$align || "flex-start"};`;
const CountBadge = styled.span`
  position: absolute; left: ${(p) => p.$x}px; top: ${(p) => p.$y}px; height: 16px; width: ${(p) => p.$w}px; border-radius: 8px;
  background: ${(p) => p.$bg}; color: #101010; font-size: 11px; line-height: 16px; text-align: center;
`;
const SearchBox = styled.div`
  width: 220px; height: 32px; margin: 0 2px 0 3px; padding: 0 2px 0 11px; flex: none; display: flex; align-items: center; gap: 10px;
  background: rgba(52, 50, 100, 0.62); border: 1px solid rgba(160, 150, 230, 0.35); border-radius: 16px;
`;
const SearchText = styled.div`flex: 1; display: flex;`;
const AppSlot = styled.div`
  position: relative; width: 44px; height: 47px; flex: none; display: flex; align-items: center; justify-content: center;
`;
const ActivePlate = styled.i`
  position: absolute; left: 2px; top: 4px; width: 36px; height: 40px; border-radius: 4px;
  background: rgba(90, 110, 190, 0.16); border: 1px solid rgba(140, 150, 220, 0.2);
`;
const AppMark = styled.i`
  position: absolute; bottom: 4px; width: ${(p) => p.$w}px; height: 3px; border-radius: 2px; background: ${(p) => p.$c};
`;
const AppArt = styled.div`position: relative; display: flex;`;
const HpTile = styled.div`
  width: 24px; height: 24px; background: #0096d6; color: #fff; font: italic 400 8px/24px ${UI_FONT}; letter-spacing: -0.4px;
  display: flex; justify-content: center;
`;
const HpBold = styled.b`font-size: 12px; line-height: 23px; letter-spacing: -1.500px;`;
const Tray = styled.div`margin-left: auto; height: 47px; display: flex; align-items: center; padding-right: 19px;`;
const Clock = styled.div`width: 81px; padding-right: 7px; display: flex; justify-content: flex-end;`;
const PreWrap = styled.div`position: relative; margin-left: 17px;`;
const PreTag = styled.span`
  position: absolute; left: 5px; bottom: 0; width: 19px; height: 8px; background: #ffc400; border-radius: 2px; color: #111;
  font-size: 7px; line-height: 8px; font-weight: 700; text-align: center;
`;

const HelpIcon = () => (
  <HelpWrap>
    <svg width="24" height="24" viewBox="-0.200 -0.200 16.400 16.400" fill="#333" stroke="#333" strokeWidth=".3">
      <path d="M8 15A7 7 0 1 1 8 1a7 7 0 0 1 0 14m0 1A8 8 0 1 0 8 0a8 8 0 0 0 0 16" />
      <path d="M5.255 5.786a.237.237 0 0 0 .241.247h.825c.138 0 .248-.113.266-.25.09-.656.54-1.134 1.342-1.134.686 0 1.314.343 1.314 1.168 0 .635-.374.927-.965 1.371-.673.489-1.206 1.060-1.168 1.987l.003.217a.25.25 0 0 0 .25.246h.811a.25.25 0 0 0 .25-.25v-.105c0-.718.273-.927 1.010-1.486.609-.463 1.244-.977 1.244-2.056 0-1.511-1.276-2.241-2.673-2.241-1.267 0-2.655.590-2.750 2.286m1.557 5.763c0 .533.425.927 1.010.927.609 0 1.028-.394 1.028-.927 0-.552-.420-.940-1.029-.940-.584 0-1.009.388-1.009.940" />
    </svg>
  </HelpWrap>
);

const bookmarks = [
  { icon: <PageIcon />, text: "", w: 118, tw: 0 },
  { icon: <PageIcon />, text: "Learning", w: 107, tw: 44 },
  { icon: <RedAppIcon />, text: "Express VPN", w: 109, tw: 69 },
  { icon: <PageIcon />, text: "LastPass password...", w: 146, tw: 106 },
  { icon: <SlideIcon />, text: "Notes of c program...", w: 153, tw: 113 },
  { icon: <DiamondIcon />, text: "Create a new SQL p...", w: 153, tw: 113 },
  { icon: <BIcon>B.</BIcon>, text: "Booking.com", w: 110, tw: 70 },
  { icon: <PlsqlIcon />, text: "PL/SQL - Functions", w: 141, tw: 101 },
  { icon: <NewTabIcon />, text: "New tab", w: 85, tw: 45 },
  { icon: <GoogleIcon />, text: "Gmail", w: 71, tw: 31 },
  { icon: <YouTubeIcon />, text: "YouTube", w: 86, tw: 47 },
  { icon: <MapsIcon />, text: "Maps", w: 70, tw: 30 },
  { icon: <UnlockIcon />, text: "Grand Theft Auto V...", w: 152, tw: 112 },
  { icon: <BoltIcon />, text: "Get Steam game ke...", w: 153, tw: 113 },
  { icon: <W3Icon />, text: "", w: 60, tw: 0 },
];

const apps = [
  { art: <TaskViewIcon /> },
  { art: <EdgeIcon />, active: true },
  { art: <TeamsIcon /> },
  { art: <ExplorerIcon /> },
  { art: <MailIcon />, badge: "57" },
  { art: <HpTile>my<HpBold>hp</HpBold></HpTile> },
  { art: <ExcelIcon /> },
  { art: <PptIcon /> },
  { art: <VsCodeIcon />, running: true },
];

const sideIcons = [<SideSearch />, <SideTag />, <SideToolbox />, <SideChess />, <SideM365 />, <SideOutlook />, <SidePlane />];

export default function App() {
  return (
    <>
      <GlobalStyle />
      <Screen>
        <TabBar>
          <Slot $w={44}><Avatar /></Slot>
          <Slot $w={35}><WorkspacesIcon /></Slot>
          <Slot $w={46}><TabActionsIcon /></Slot>
          <Tab>
            <PageIcon />
            <TabTitle><FitText width={73}>Tax Calculator</FitText></TabTitle>
            <CloseIcon />
          </Tab>
          <Slot $w={43}><PlusIcon /></Slot>
          <WindowButtons>
            <Slot $w={46}><MinIcon /></Slot>
            <Slot $w={46}><RestoreIcon /></Slot>
            <Slot $w={45}><CloseIcon s={11} /></Slot>
          </WindowButtons>
        </TabBar>

        <Body>
          <Main>
            <Toolbar>
              <Slot $w={44}><BackIcon /></Slot>
              <Slot $w={44}><RefreshIcon /></Slot>
              <Slot $w={44}><SearchIcon /></Slot>
              <AddressBar>
                <InfoIcon />
                <Url>
                  <FitText width={53} size={13.5} line={20}>127.0.0.1</FitText>
                  <FitText width={107} size={13.5} line={20} color="#9a9a9a">:5500/demo.html</FitText>
                </Url>
                <Slot $w={40}><ZoomInIcon /></Slot>
                <Slot $w={40}><ReadAloudIcon /></Slot>
                <Slot $w={40}><StarIcon /></Slot>
              </AddressBar>
              <Slot $w={45}><SplitIcon /></Slot>
              <Slot $w={45}><MusicIcon /></Slot>
              <Slot $w={42}><FavoritesIcon /></Slot>
              <Slot $w={44}><CollectionsIcon /></Slot>
              <Slot $w={44}><HealthIcon /></Slot>
              <Slot $w={44}><FeedbackIcon /></Slot>
              <Slot $w={44}><DotsIcon /></Slot>
              <Tooltip><FitText width={276}>Click to go back (Alt+Left arrow), hold to see history</FitText></Tooltip>
            </Toolbar>
            <Bookmarks>
              {bookmarks.map((b, i) => (
                <Bookmark key={i} $w={b.w}>
                  {b.icon}
                  {b.text && <FitText width={b.tw}>{b.text}</FitText>}
                </Bookmark>
              ))}
              <ChevronRight />
              <BarDivider />
              <Bookmark $w={103}>
                <FolderIcon />
                <FitText width={79}>Other favorites</FitText>
              </Bookmark>
            </Bookmarks>
            <Viewport>
              <Page>
                <Card>
                  <Heading>Tax Calculator</Heading>
                  <Group>
                    <Label>Enter age group</Label>
                    <Select>
                      Enter your age
                      <Icon w={14} h={10} color="#495057" sw={2}><path d="M1.500 2L7 7.500 12.500 2" /></Icon>
                    </Select>
                    <Menu>
                      <Option>Less than 40</Option>
                      <Option>Between 40 and 60</Option>
                      <Option>60 or older</Option>
                    </Menu>
                  </Group>
                  <Group>
                    <Label />
                    <Field>Enter gross annual income</Field>
                  </Group>
                  <Group>
                    <Label>Enter Extra Income (in Lakhs)<HelpIcon /></Label>
                    <Field>Enter extra income from other sources</Field>
                  </Group>
                  <Group>
                    <Label>Enter total deductions (in Lakhs)<HelpIcon /></Label>
                    <Field>Add total applicable deductions</Field>
                  </Group>
                  <Submit type="button">Calculate Tax</Submit>
                </Card>
              </Page>
              <ScrollTrack>
                <Arrow />
                <ScrollThumb />
                <Arrow $down />
              </ScrollTrack>
            </Viewport>
          </Main>
          <Sidebar>
            <Slot $w={42} $h={38}><CopilotIcon /></Slot>
            {sideIcons.map((icon, i) => (
              <Slot key={i} $w={42} $h={i === 0 ? 41 : 40.2}>{icon}</Slot>
            ))}
            <SideRule $m="12px 0 13px" />
            <AddSlot><PlusIcon s={13} color="#ddd" /><Dot /></AddSlot>
            <Spacer />
            <SideRule $m="0" />
            <Slot $w={42} $h={44}><GearIcon /></Slot>
          </Sidebar>
        </Body>

        <Taskbar>
          <Backdrop><Wallpaper /></Backdrop>
          <Strip>
            <Weather>
              <WeatherArt />
              <CountBadge $x={30} $y={1} $w={16} $bg="#ff99a4">1</CountBadge>
              <Stack>
                <FitText width={25}>36°C</FitText>
                <FitText width={67} color="#c4c8d0">Hot weather</FitText>
              </Stack>
            </Weather>
            <AppSlot><WindowsIcon /></AppSlot>
            <SearchBox>
              <SearchIcon s={15} sw={1.6} color="#e6e6f5" />
              <SearchText><FitText width={41} size={13} color="#d5d8ee">Search</FitText></SearchText>
              <BannerArt />
            </SearchBox>
            {apps.map((a, i) => (
              <AppSlot key={i}>
                {a.active && <ActivePlate />}
                <AppArt>
                  {a.art}
                  {a.badge && <CountBadge $x={11} $y={-5} $w={21} $bg="#4cc2ff">{a.badge}</CountBadge>}
                </AppArt>
                {a.active && <AppMark $w={16} $c="#4cc2ff" />}
                {a.running && <AppMark $w={6} $c="#9a9cb8" />}
              </AppSlot>
            ))}
            <Tray>
              <Slot $w={39}><ChevronUp /></Slot>
              <Slot $w={27}><DropboxIcon /></Slot>
              <Slot $w={48}>
                <Stack $align="center">
                  <FitText width={24}>ENG</FitText>
                  <FitText width={12}>IN</FitText>
                </Stack>
              </Slot>
              <Slot $w={28}><WifiIcon /></Slot>
              <Slot $w={20}><SpeakerIcon /></Slot>
              <Slot $w={28}><BatteryIcon /></Slot>
              <Clock>
                <Stack $align="flex-end">
                  <FitText width={29}>17:18</FitText>
                  <FitText width={63}>12-04-2024</FitText>
                </Stack>
              </Clock>
              <BellIcon />
              <PreWrap><CopilotIcon pre /><PreTag>PRE</PreTag></PreWrap>
            </Tray>
          </Strip>
        </Taskbar>
      </Screen>
    </>
  );
}
